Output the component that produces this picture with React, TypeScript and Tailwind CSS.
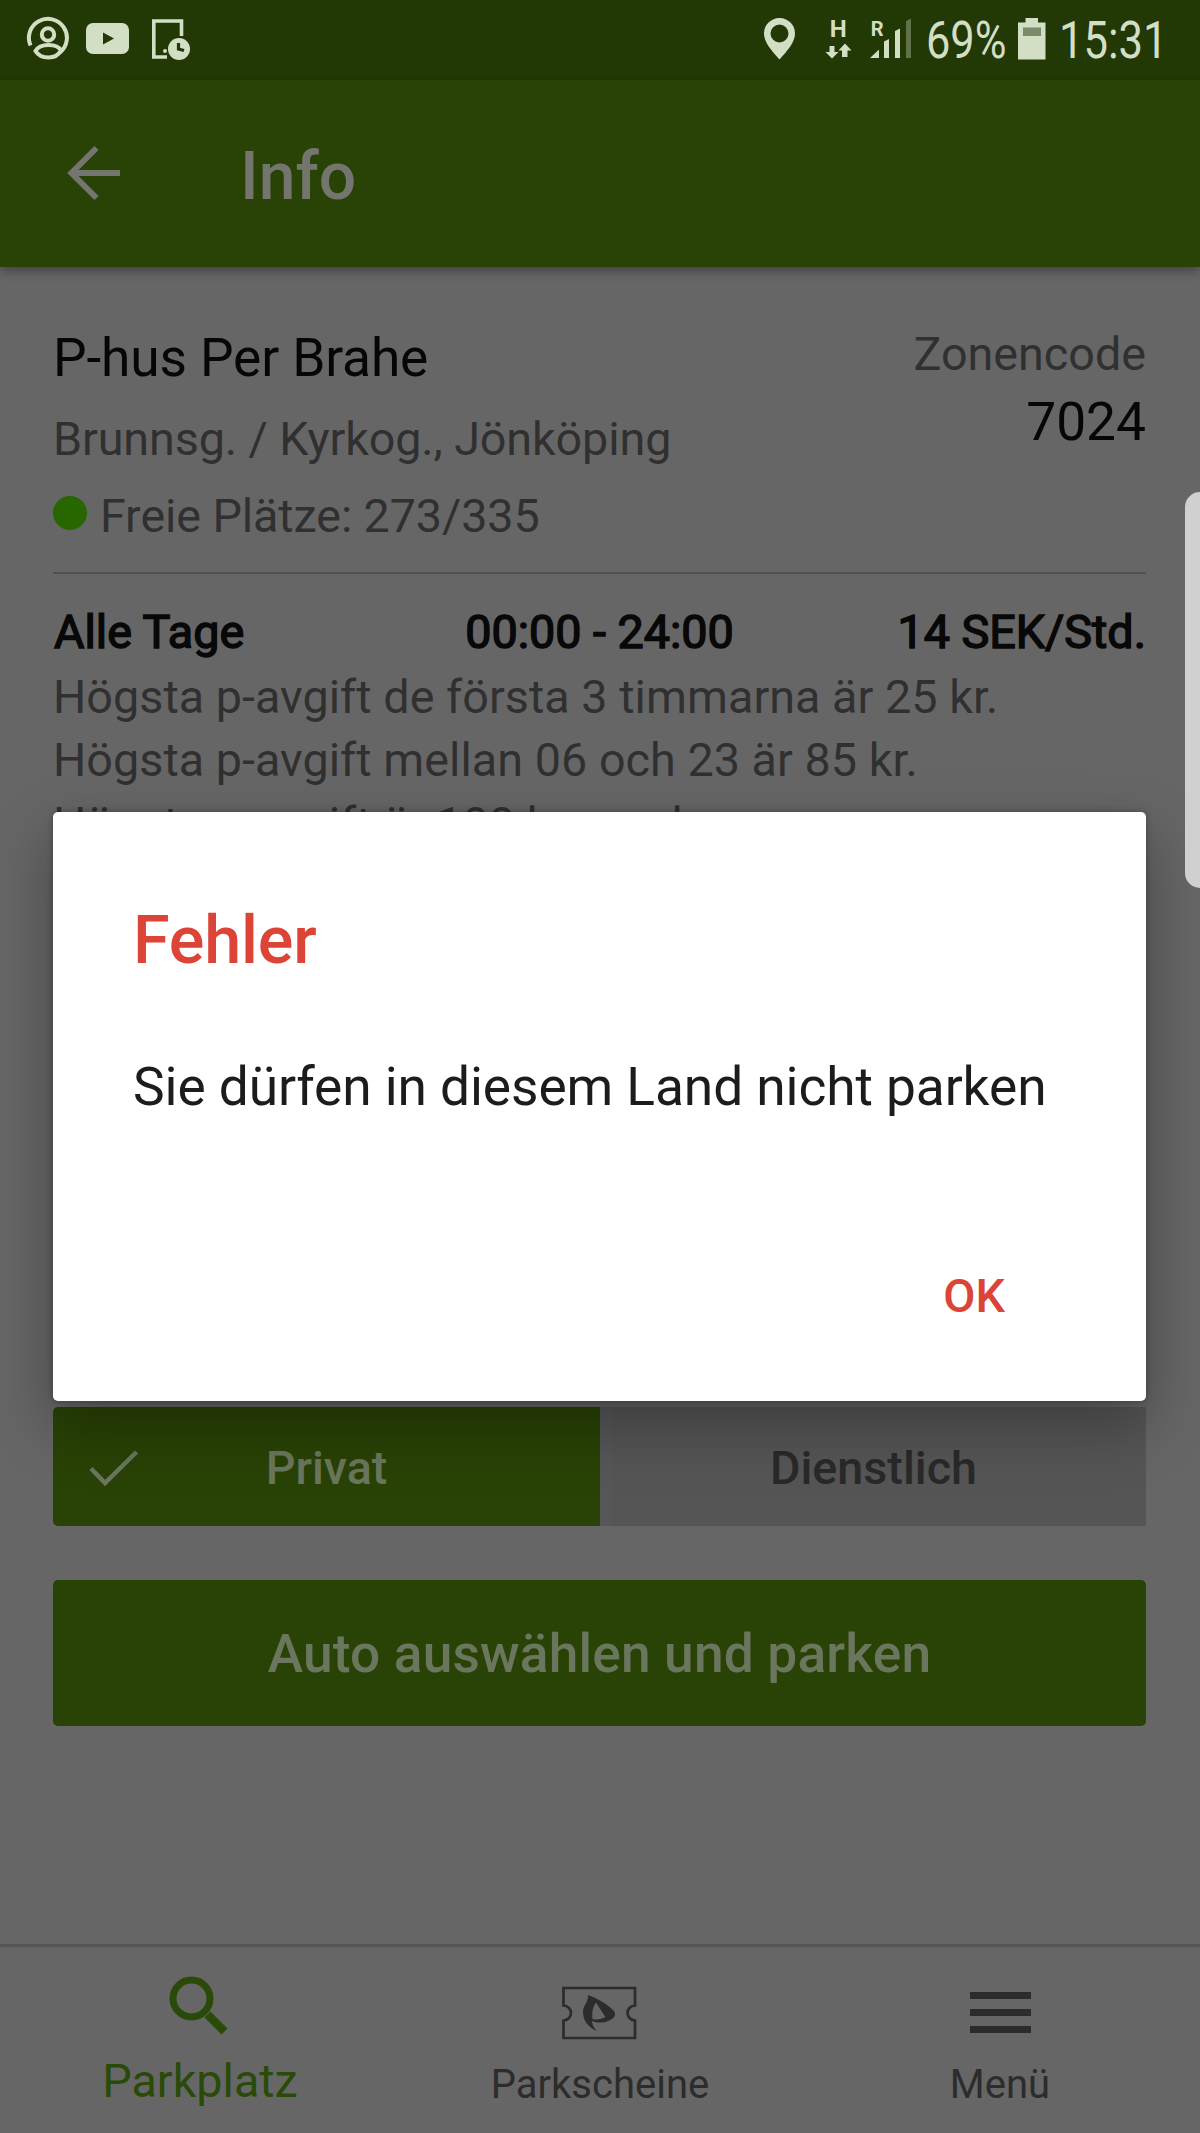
import type { ReactNode } from "react";

function StatusBar() {
  return (
    <div className="flex h-[80px] items-start bg-[#223805] text-[#d3dfc5]">
      <svg className="ml-[26px] mt-4 h-11 w-11" viewBox="26 16 44 44" fill="none" stroke="currentColor" strokeWidth="4">
        <path d="M30.500 45.500A19 19 0 1 1 60 52.500" />
        <circle cx="48" cy="34.500" r="6.200" />
        <path d="M35.500 51C38 46.500 43 45 48.500 45S59 46.500 61 50.500C58 56 53 57.500 48.500 57.500S38.500 56 35.500 51Z" />
      </svg>
      <svg className="ml-4 mt-[23px] h-8 w-[43px]" viewBox="0 0 43 32">
        <rect width="43" height="31" rx="7" fill="currentColor" />
        <path d="M17 9.500L28 15.500L17 21.500Z" fill="#223805" />
      </svg>
      <svg className="ml-[23px] mt-[18px] h-[42px] w-10" viewBox="152 18 40 42">
        <path d="M181.500 36V21H153.800V57H167" fill="none" stroke="currentColor" strokeWidth="3.600" />
        <circle cx="165" cy="51" r="2" fill="currentColor" />
        <circle cx="179" cy="49" r="11" fill="currentColor" />
        <path d="M178.500 43V49L184 50.500" fill="none" stroke="#223805" strokeWidth="3.200" />
      </svg>
      <svg className="ml-[572px] mt-[18px] h-[42px] w-8" viewBox="0 0 32 42">
        <path fill="currentColor" fillRule="evenodd" d="M15.500 0A15.300 15.300 0 0 1 31 15.500C31 24 24 32 15.500 41.500C7 32 0 24 0 15.500A15.300 15.300 0 0 1 15.500 0ZM15.500 6.500A9 9 0 1 0 15.500 24.500A9 9 0 1 0 15.500 6.500Z" />
      </svg>
      <svg className="ml-[29px] mt-[6px] h-[54px] w-[28px]" viewBox="825 6 28 54" fill="currentColor">
        <text x="829.800" y="37" fontFamily="Roboto" fontWeight="700" fontSize="24">H</text>
        <path d="M829.500 46H834.500V52H838.500L832 58.500L825.500 52H829.500Z" />
        <path d="M842 57V50.500H838.500L845 43.500L851.500 50.500H847.500V57Z" />
      </svg>
      <svg className="ml-[17px] mt-[6px] h-[54px] w-11" viewBox="870 6 44 54" fill="currentColor">
        <text x="870.800" y="35.500" fontFamily="Roboto" fontWeight="700" fontSize="20">R</text>
        <path d="M870 58L879 49.500V58Z" />
        <path d="M884 41.500L889 39V58H884Z" />
        <path d="M895 31L900 28.500V58H895Z" />
        <path d="M906 21L911 18.500V58H906Z" opacity=".35" />
      </svg>
      <span className="ml-[12px] mt-[11px] w-[80px] origin-left scale-x-[0.85] whitespace-nowrap text-[51px] leading-[60px]">69%</span>
      <svg className="ml-[12px] mt-[18px] h-[42px] w-7" viewBox="0 0 28 42">
        <path fill="currentColor" d="M7.500 0H20V4.500H27.500V41.500H0V4.500H7.500Z" />
        <rect x="5" y="9.500" width="18" height="8.500" fill="#7b8a68" />
      </svg>
      <span className="ml-[13px] mt-[11px] origin-left scale-x-[0.855] whitespace-nowrap text-[51px] leading-[60px]">15:31</span>
    </div>
  );
}

function Header() {
  return (
    <header className="relative flex h-[187px] items-start bg-[#294205] text-[#74756f] shadow-[0_4px_10px_rgba(0,0,0,0.35)]">
      <svg className="ml-[67px] mt-[65px] h-[56px] w-[54px]" viewBox="0 0 54 56" fill="none" stroke="currentColor" strokeWidth="6">
        <path d="M29.500 3L4.500 28L29.500 53M4 28H53" />
      </svg>
      <h1 className="ml-[119px] mt-[57px] text-[66px] font-medium leading-[80px]">Info</h1>
    </header>
  );
}

function FacilityInfo() {
  return (
    <section className="flex justify-between border-b-2 border-[#515151] pb-[28px]">
      <div className="whitespace-nowrap text-[46.700px] leading-[56px] tracking-[-0.1px] text-[#303030]">
        <h2 className="text-[53.300px] leading-[64px] tracking-[-0.15px] text-[#060606]">P-hus Per Brahe</h2>
        <p className="mt-[21px]">Brunnsg. / Kyrkog., Jönköping</p>
        <p className="mt-[21px] flex items-start">
          <span className="mt-[8px] mr-[13px] h-[34px] w-[34px] rounded-full bg-[#286600]" />
          Freie Plätze: 273/335
        </p>
      </div>
      <div className="text-right">
        <div className="text-[46.700px] leading-[56px] text-[#303030]">Zonencode</div>
        <div className="mt-[8px] text-[53.300px] leading-[64px] text-[#060606]">7024</div>
      </div>
    </section>
  );
}

function Tariffs() {
  return (
    <section className="h-[833px] overflow-hidden pt-[28px]">
      <div className="grid grid-cols-3 whitespace-nowrap text-[46.700px] leading-[60px] text-[#080808] [-webkit-text-stroke:1.500px_#080808]">
        <span className="pl-px">Alle Tage</span>
        <span className="text-center">00:00 - 24:00</span>
        <span className="text-right">14 SEK/Std.</span>
      </div>
      <div className="mt-[4px] whitespace-nowrap text-[46.700px] leading-[63.300px] tracking-[0.04px] text-[#303030]">
        <p>Högsta p-avgift de första 3 timmarna är 25 kr.</p>
        <p>Högsta p-avgift mellan 06 och 23 är 85 kr.</p>
        <p>Högsta p-avgift är 100 kr per dag.</p>
      </div>
    </section>
  );
}

function NavItem({ label, active, children }: { label: string; active?: boolean; children: ReactNode }) {
  return (
    <div className={active ? "flex flex-1 flex-col items-center text-[#294a08]" : "flex flex-1 flex-col items-center text-[#2c2c2c]"}>
      <div className="h-[102px]">{children}</div>
      <span className={active ? "mt-[4px] text-[46.700px] leading-[56px]" : "mt-[12px] text-[40px] leading-[48px]"}>{label}</span>
    </div>
  );
}

function BottomNav() {
  return (
    <nav className="flex h-[189px] border-t-[3px] border-[#555]">
      <NavItem label="Parkplatz" active>
        <svg className="mr-[3px] mt-[29px] h-[60px] w-[60px]" viewBox="169 1975 60 60" fill="none" stroke="currentColor" strokeWidth="7">
          <circle cx="191.500" cy="1997.500" r="18.500" />
          <path d="M207.500 2013.500L224.500 2030.500" strokeWidth="8.500" />
        </svg>
      </NavItem>
      <NavItem label="Parkscheine">
        <svg className="mr-[2px] mt-[38px] h-[56px] w-[76px]" viewBox="561 1985 76 56">
          <path fill="none" stroke="currentColor" strokeWidth="2.700" d="M563.500 1988H635V2005.500A7.500 7.500 0 0 0 635 2020.500V2038H563.500V2020.500A7.500 7.500 0 0 0 563.500 2005.500Z" />
          <path fill="currentColor" fillRule="evenodd" d="M588 1995C599 1999 608 2005 614 2011C617 2016 613 2019 608 2021C603 2023 597 2023 592 2021C592 2025 594 2028 597 2031C589 2028 583 2021 583 2012C583 2005 589 2001 588 1995ZM596 2002.500C592 2008 592 2014 592.500 2019C597 2020 602 2019 605.500 2017C602 2012 599 2007 596 2002.500Z" />
        </svg>
      </NavItem>
      <NavItem label="Menü">
        <div className="mt-[45px] flex w-[61px] flex-col gap-[10px]">
          <i className="h-[7px] bg-current" />
          <i className="h-[7px] bg-current" />
          <i className="h-[7px] bg-current" />
        </div>
      </NavItem>
    </nav>
  );
}

function ErrorDialog() {
  return (
    <div role="dialog" className="absolute left-[53px] top-[812px] flex h-[589px] w-[1093px] flex-col rounded-[5px] bg-white px-[80px] shadow-[0_24px_60px_4px_rgba(0,0,0,0.28),0_0_6px_rgba(0,0,0,0.3)]">
      <h2 className="mt-[88px] text-[66.500px] font-medium leading-[80px] tracking-[-0.15px] text-[#db4437]">Fehler</h2>
      <p className="mt-[75px] whitespace-nowrap text-[53.300px] leading-[64px] tracking-[-0.1px] text-[#1c1c1c]">Sie dürfen in diesem Land nicht parken</p>
      <button className="mt-[149px] mr-[61px] self-end text-[46.700px] font-medium leading-[56px] text-[#db4437]">OK</button>
    </div>
  );
}

export default function App() {
  return (
    <div className="relative h-[2133px] w-[1200px] overflow-hidden bg-[#666] font-[Roboto,sans-serif]">
      <StatusBar />
      <Header />
      <main className="flex h-[1677px] flex-col pl-[53px] pr-[54px] pt-[59px]">
        <FacilityInfo />
        <Tariffs />
        <div className="flex h-[119px] shrink-0 text-[46.700px] font-medium leading-[56px]">
          <div className="relative flex w-[547px] items-center justify-center rounded-l-[5px] bg-[#294205] pt-[2px] text-[#6b765e]">
            <svg className="absolute left-[36px] top-[42px] h-[40px] w-[50px]" viewBox="0 0 50 40" fill="none" stroke="currentColor" strokeWidth="4.500">
              <path d="M2 19.500L16 34L47.500 3" />
            </svg>
            Privat
          </div>
          <div className="flex flex-1 items-center justify-center border-l-[12px] border-[#56575b] bg-[#555] pr-[11px] pt-[2px] text-[#292929]">Dienstlich</div>
        </div>
        <button className="mt-[54px] h-[146px] shrink-0 rounded-[5px] bg-[#294205] pt-[2px] text-[53.300px] font-medium leading-[64px] tracking-[0.15px] text-[#6b765e]">
          Auto auswählen und parken
        </button>
      </main>
      <BottomNav />
      <ErrorDialog />
      <div className="absolute right-0 top-[492px] h-[396px] w-[15px] rounded-l-[15px] bg-[#d0d0d0]" />
    </div>
  );
}
